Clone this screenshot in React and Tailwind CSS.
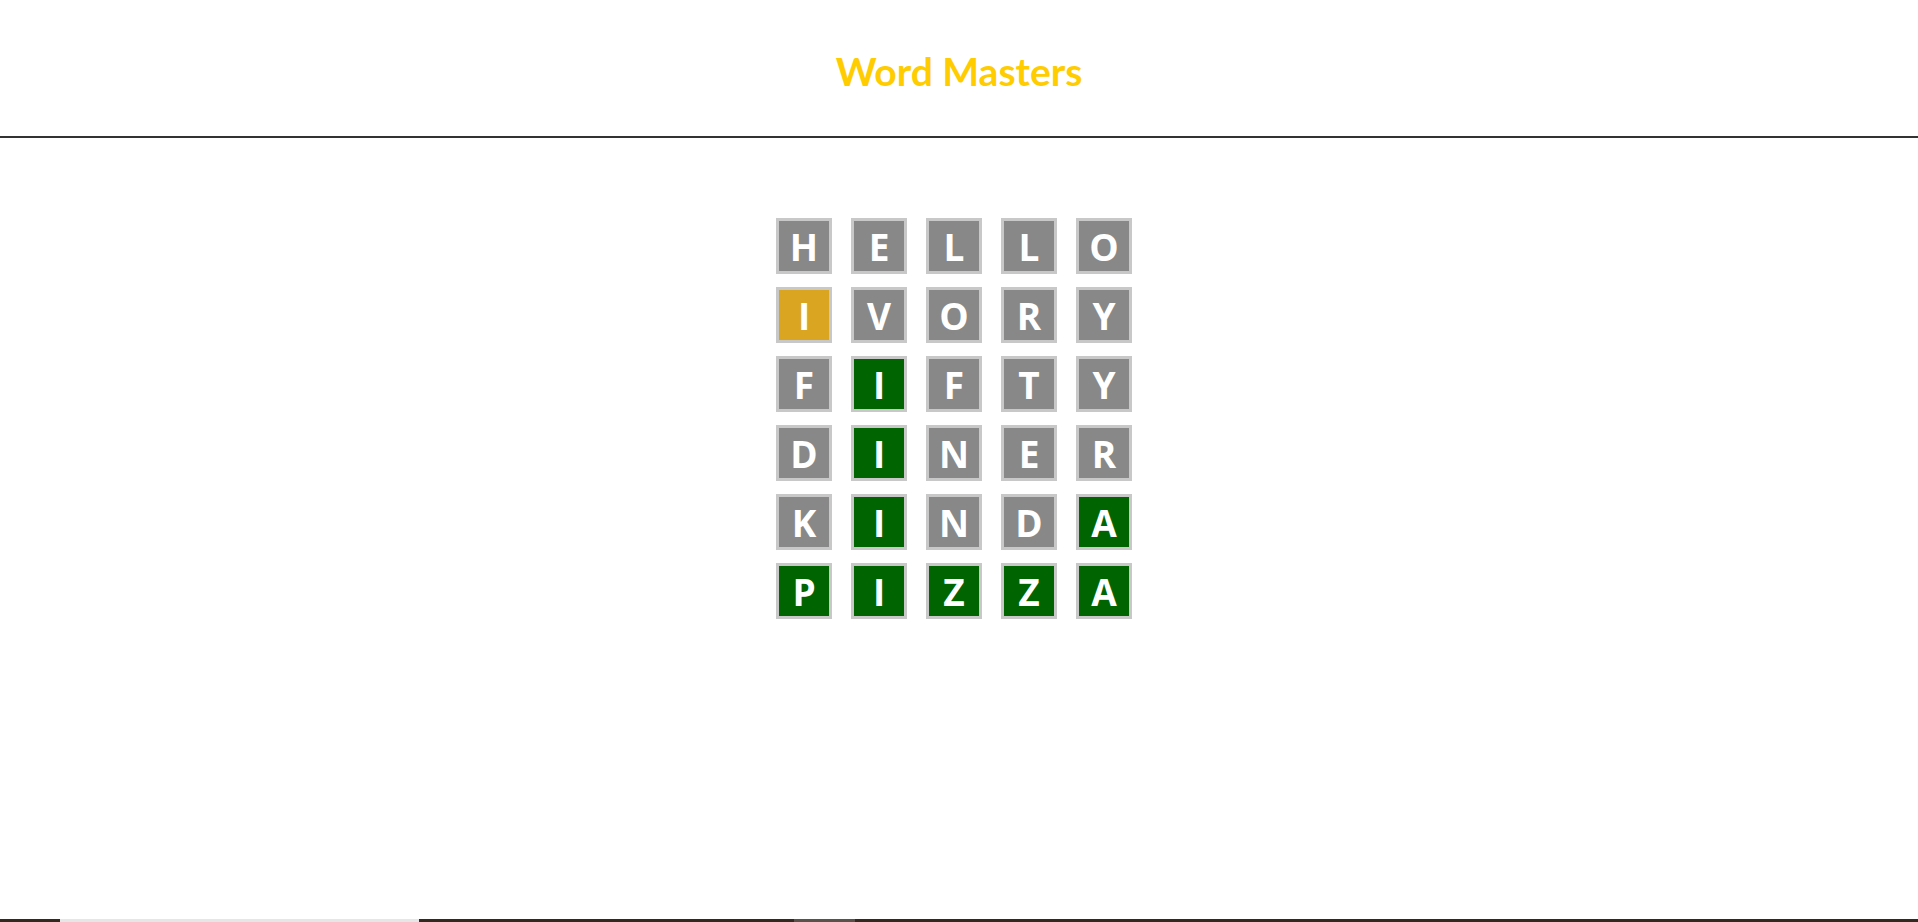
import React from 'react';

const guesses = [
  { word: 'HELLO', result: 'xxxxx' },
  { word: 'IVORY', result: 'yxxxx' },
  { word: 'FIFTY', result: 'xgxxx' },
  { word: 'DINER', result: 'xgxxx' },
  { word: 'KINDA', result: 'xgxxg' },
  { word: 'PIZZA', result: 'ggggg' },
];

const tileColor = {
  x: 'bg-[#888888]',
  y: 'bg-[#daa520]',
  g: 'bg-[#006400]',
};

const Tile = ({ letter, state }) => (
  <div
    className={`w-[56px] h-[56px] border-[3px] border-[#c8c8c8] flex items-center justify-center text-white font-bold text-[37px] leading-none ${tileColor[state]}`}
    style={{ fontFamily: '"Open Sans", sans-serif' }}
  >
    {letter}
  </div>
);

const App = () => {
  return (
    <div className="min-h-[922px] flex flex-col bg-white" style={{ fontFamily: 'Lato, "Open Sans", sans-serif' }}>
      <header className="h-[138px] flex items-center justify-center border-b-2 border-[#333333]">
        <h1 className="text-[39px] font-bold text-[#ffcc00] leading-none pt-[6px]">Word Masters</h1>
      </header>

      <main className="flex-1 flex justify-center pt-[80px] pr-[10px]">
        <div className="flex flex-col gap-[13px]">
          {guesses.map((g, i) => (
            <div key={i} className="flex gap-[19px]">
              {g.word.split('').map((ch, j) => (
                <Tile key={j} letter={ch} state={g.result[j]} />
              ))}
            </div>
          ))}
        </div>
      </main>

      <div className="h-[3px] bg-[#33291f] flex">
        <div className="ml-[60px] w-[359px] bg-[#e6e6e6]"></div>
        <div className="ml-[375px] w-[61px] bg-[#5a514a]"></div>
      </div>
    </div>
  );
};

export default App;
